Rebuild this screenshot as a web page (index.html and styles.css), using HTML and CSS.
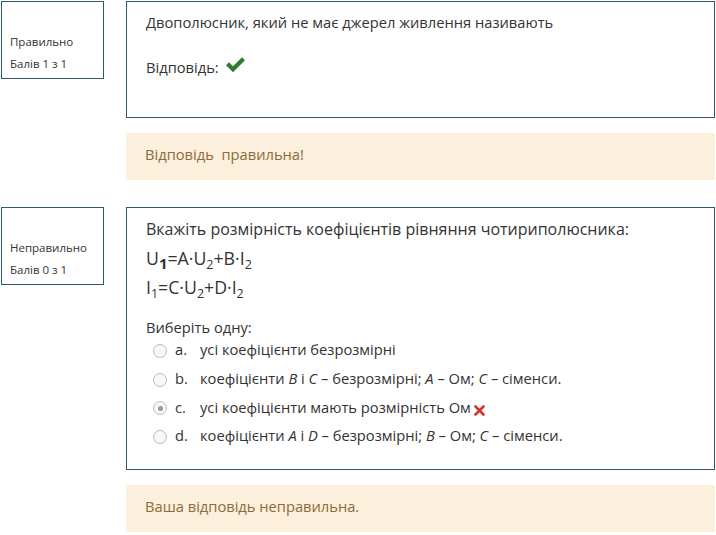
FILE: index.html
```html
<!DOCTYPE html>
<html lang="uk">
<head>
  <meta charset="UTF-8">
  <title>Тест</title>
  <link rel="stylesheet" href="styles.css">
</head>
<body>
  <div class="que">
    <div class="info">
      <div class="state">Правильно</div>
      <div class="grade">Балів 1 з 1</div>
    </div>
    <div class="content">
      <div class="formulation first">
        <p class="qtext">Двополюсник, який не має джерел живлення називають</p>
        <p class="answer">Відповідь:
          <svg class="check" width="21" height="17" viewBox="0 0 21 17"><path d="M1 9.2 L4 6.2 L8 10.2 L17 1.2 L20 4.2 L8 16.2 Z" fill="#2e7d32"/></svg>
        </p>
      </div>
      <div class="feedback">Відповідь&nbsp; правильна!</div>
    </div>
  </div>

  <div class="que">
    <div class="info">
      <div class="state">Неправильно</div>
      <div class="grade">Балів 0 з 1</div>
    </div>
    <div class="content">
      <div class="formulation">
        <p class="qline">Вкажіть розмірність коефіцієнтів рівняння чотириполюсника:</p>
        <p class="formula">U<sub><b>1</b></sub>=A·U<sub>2</sub>+B·I<sub>2</sub></p>
        <p class="formula">I<sub>1</sub>=C·U<sub>2</sub>+D·I<sub>2</sub></p>
        <p class="prompt">Виберіть одну:</p>
        <div class="options">
          <div class="opt"><span class="radio"></span><span class="letter">a.</span><span>усі коефіцієнти безрозмірні</span></div>
          <div class="opt"><span class="radio"></span><span class="letter">b.</span><span>коефіцієнти <i>B</i> і <i>C</i> – безрозмірні; <i>A</i> – Ом; <i>C</i> – сіменси.</span></div>
          <div class="opt"><span class="radio checked"></span><span class="letter">c.</span><span>усі коефіцієнти мають розмірність Ом</span><svg class="cross" width="11" height="11" viewBox="0 0 11 11"><path d="M1.5 1.5 L9.5 9.5 M9.5 1.5 L1.5 9.5" stroke="#d0362a" stroke-width="2.6" stroke-linecap="round"/></svg></div>
          <div class="opt"><span class="radio"></span><span class="letter">d.</span><span>коефіцієнти <i>A</i> і <i>D</i> – безрозмірні; <i>B</i> – Ом; <i>C</i> – сіменси.</span></div>
        </div>
      </div>
      <div class="feedback">Ваша відповідь неправильна.</div>
    </div>
  </div>
</body>
</html>
```

FILE: styles.css
```css
body {
  margin: 0;
  padding: 1px 0 0 1px;
  font-family: "Open Sans", "Liberation Sans", sans-serif;
  color: #333;
  background: #fff;
}
p {
  margin: 0;
}
.que {
  display: flex;
  align-items: flex-start;
  gap: 22px;
  margin-bottom: 27px;
}
.info {
  width: 93px;
  height: 76px;
  border: 1px solid #2e5b6b;
  padding-left: 8px;
  font-size: 11.5px;
  line-height: 22px;
}
.info .state {
  margin-top: 29px;
}
.content {
  width: 589px;
}
.formulation {
  border: 1px solid #2e5b6b;
  padding: 7px 19px 19px;
}
.formulation.first {
  padding: 9px 19px 39px;
  font-size: 14.7px;
  line-height: 22px;
}
.qtext {
  margin-bottom: 23px;
}
.answer {
  display: flex;
  align-items: center;
  gap: 6px;
}
.check {
  margin-top: -5px;
}
.feedback {
  margin-top: 15px;
  background: #fcefdc;
  color: #8a6d3b;
  font-size: 14.7px;
  line-height: 22px;
  padding: 10px 19px 15px;
}
.qline {
  font-size: 16px;
  line-height: 29px;
}
.formula {
  font-size: 17.7px;
  line-height: 29px;
}
sub {
  font-size: 12.5px;
  line-height: 0;
  vertical-align: -4px;
}
sub b {
  font-size: 15px;
}
.prompt {
  margin-top: 17px;
  font-size: 14.7px;
  line-height: 16px;
}
.options {
  padding-left: 7px;
}
.opt {
  display: flex;
  align-items: center;
  font-size: 14.7px;
  height: 28.7px;
}
.radio {
  width: 12px;
  height: 12px;
  border: 1px solid #bbb;
  border-radius: 50%;
  background: #f7f7f7;
  margin: 3px 8px 0 0;
  position: relative;
}
.radio.checked::after {
  content: "";
  position: absolute;
  left: 3.5px;
  top: 3.5px;
  width: 5px;
  height: 5px;
  border-radius: 50%;
  background: #999;
}
.letter {
  width: 25px;
}
.cross {
  margin: 8px 0 0 3px;
}
```
